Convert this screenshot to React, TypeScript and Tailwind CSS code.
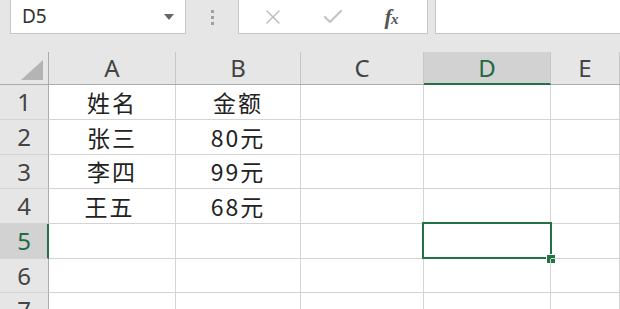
import { X, Check } from "lucide-react";

const cols = ["A", "B", "C", "D", "E"];
const colW = ["w-[127px]", "w-[125px]", "w-[123px]", "w-[127px]", "flex-1"];
const rowH = ["h-[35px]", "h-[35px]", "h-[34px]", "h-[35px]", "h-[35px]", "h-[34px]", "h-[35px]"];

const data: Record<number, [string, string]> = {
  1: ["姓名", "金额"],
  2: ["张三", "80元"],
  3: ["李四", "99元"],
  4: ["王五", "68元"],
};

export default function App() {
  return (
    <div
      className="w-[620px] h-[309px] overflow-hidden bg-[#e6e6e6] flex flex-col"
      style={{ fontFamily: '"Noto Sans", "Noto Sans CJK SC", sans-serif' }}
    >
      {/* formula bar */}
      <div className="h-[34px] flex items-stretch shrink-0">
        <div className="ml-[10px] w-[176px] bg-white border border-t-0 border-[#c6c6c6] flex items-center justify-between pl-[11px] pr-[11px]">
          <span className="text-[19px] text-[#333] leading-none">D5</span>
          <div className="w-0 h-0 border-l-[5px] border-r-[5px] border-t-[6px] border-l-transparent border-r-transparent border-t-[#666]" />
        </div>
        <div className="w-[52px] flex flex-col items-center justify-center gap-[3px]">
          <div className="w-[3px] h-[3px] bg-[#a0a0a0]" />
          <div className="w-[3px] h-[3px] bg-[#a0a0a0]" />
          <div className="w-[3px] h-[3px] bg-[#a0a0a0]" />
        </div>
        <div className="w-[190px] bg-white border border-t-0 border-[#c6c6c6] flex items-center">
          <div className="w-[66px] flex justify-center pl-[2px]">
            <X size={24} strokeWidth={1.5} className="text-[#bdbdbd]" />
          </div>
          <div className="w-[56px] flex justify-center">
            <Check size={24} strokeWidth={2.2} className="text-[#c4c4c4]" />
          </div>
          <div className="flex-1 flex justify-center pr-[6px]">
            <span
              className="text-[22px] leading-none italic font-bold text-[#555] tracking-[-1px]"
              style={{ fontFamily: '"Liberation Serif", serif' }}
            >
              f<span className="text-[15px]">x</span>
            </span>
          </div>
        </div>
        <div className="ml-[7px] flex-1 bg-white border border-t-0 border-r-0 border-[#c6c6c6]" />
      </div>

      <div className="h-[18px] shrink-0" />

      {/* sheet */}
      <div className="flex-1 bg-white flex flex-col">
        {/* column headers */}
        <div className="h-[33px] flex bg-[#e6e6e6] border-b border-[#ababab] shrink-0">
          <div className="w-[49px] border-r border-[#ababab] relative">
            <svg className="absolute right-[5px] bottom-[4px]" width="22" height="20" viewBox="0 0 22 20">
              <polygon points="22,0 22,20 0,20" fill="#b4b4b4" />
            </svg>
          </div>
          {cols.map((c, i) => (
            <div
              key={c}
              className={`${colW[i]} flex items-center justify-center text-[24px] leading-none ${
                c === "D"
                  ? "bg-[#d2d2d2] text-[#1f6b41] border-r border-[#c6c6c6] -mb-[1px] border-b-2 border-b-[#217346]"
                  : "text-[#444] border-r border-[#c6c6c6]"
              }`}
            >
              {c}
            </div>
          ))}
        </div>

        {rowH.map((h, r) => {
          const row = r + 1;
          const vals = data[row];
          const sel = row === 5;
          return (
            <div key={row} className={`${h} flex shrink-0`}>
              <div
                className={`w-[49px] flex items-center justify-center text-[24px] leading-none border-b border-[#d4d4d4] ${
                  sel
                    ? "bg-[#d2d2d2] text-[#1f6b41] border-r-2 border-r-[#217346] pl-[1px]"
                    : "bg-[#e6e6e6] text-[#444] border-r border-r-[#ababab]"
                }`}
              >
                {row}
              </div>
              {cols.map((c, i) => (
                <div
                  key={c}
                  className={`${colW[i]} relative border-r border-b border-[#d4d4d4] flex items-center justify-center text-[23px] leading-none text-[#222]`}
                  style={{ fontFamily: '"Noto Sans CJK SC", sans-serif' }}
                >
                  {vals && i < 2 ? (
                    <span className={`tracking-[2px] ${row === 4 && i === 0 ? "-ml-[5px]" : ""}`}>{vals[i]}</span>
                  ) : null}
                  {sel && c === "D" ? (
                    <>
                      <div className="absolute -left-[2px] -top-[2px] -right-[2px] -bottom-[1px] border-2 border-[#217346]" />
                      <div className="absolute -right-[6px] -bottom-[6px] w-[10px] h-[10px] bg-[#217346] border border-white" />
                    </>
                  ) : null}
                </div>
              ))}
            </div>
          );
        })}
      </div>
    </div>
  );
}
